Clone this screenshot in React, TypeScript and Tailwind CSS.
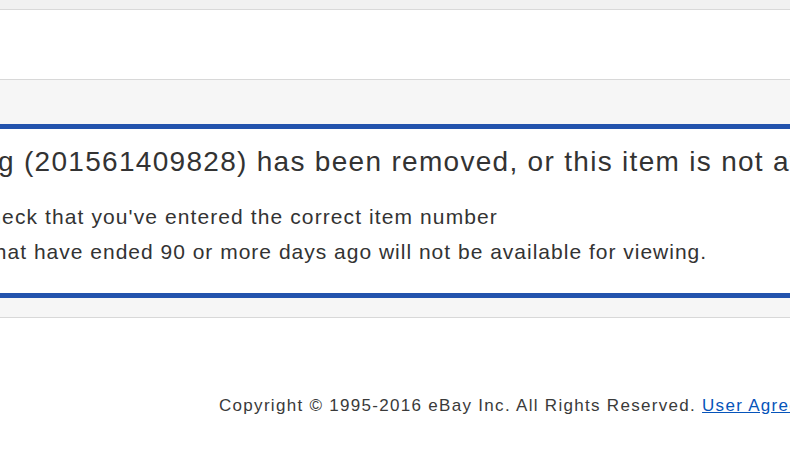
import React from 'react'

const App = () => {
  return (
    <div className="w-full min-h-[450px] overflow-hidden bg-white text-[#333] font-['Liberation_Sans',Arial,sans-serif]">
      {/* header strip */}
      <div className="h-[10px] bg-[#f1f1f1] border-b border-[#d9d9d9]" />
      <div className="h-[69px] bg-white" />

      {/* message area */}
      <div className="border-y border-[#d8d8d8] bg-[#f6f6f6] pt-[44px] pb-[19px]">
        <div className="border-y-[5px] border-[#2353ad] bg-white pt-[16px] pb-[24px] whitespace-nowrap">
          <h1 className="-ml-[133px] text-[28px] leading-[34px] tracking-[1.3px] font-normal">
            This listing (201561409828) has been removed, or this item is not available.
          </h1>
          <div className="-ml-[98px] mt-[20px] text-[21px] leading-[35px] tracking-[1px]">
            <p className="-ml-[2px] tracking-[1.1px]">Please check that you've entered the correct item number</p>
            <p>Listings that have ended 90 or more days ago will not be available for viewing.</p>
          </div>
        </div>
      </div>

      {/* footer */}
      <div className="pt-[76px] pl-[219px] whitespace-nowrap text-[17px] leading-[24px] tracking-[1.3px] text-[#3a3a3a]">
        Copyright © 1995-2016 eBay Inc. All Rights Reserved.{' '}
        <a href="#" className="text-[#0654ba] underline">User Agreement</a>, Privacy, Cookies and AdChoice
      </div>
    </div>
  )
}

export default App
